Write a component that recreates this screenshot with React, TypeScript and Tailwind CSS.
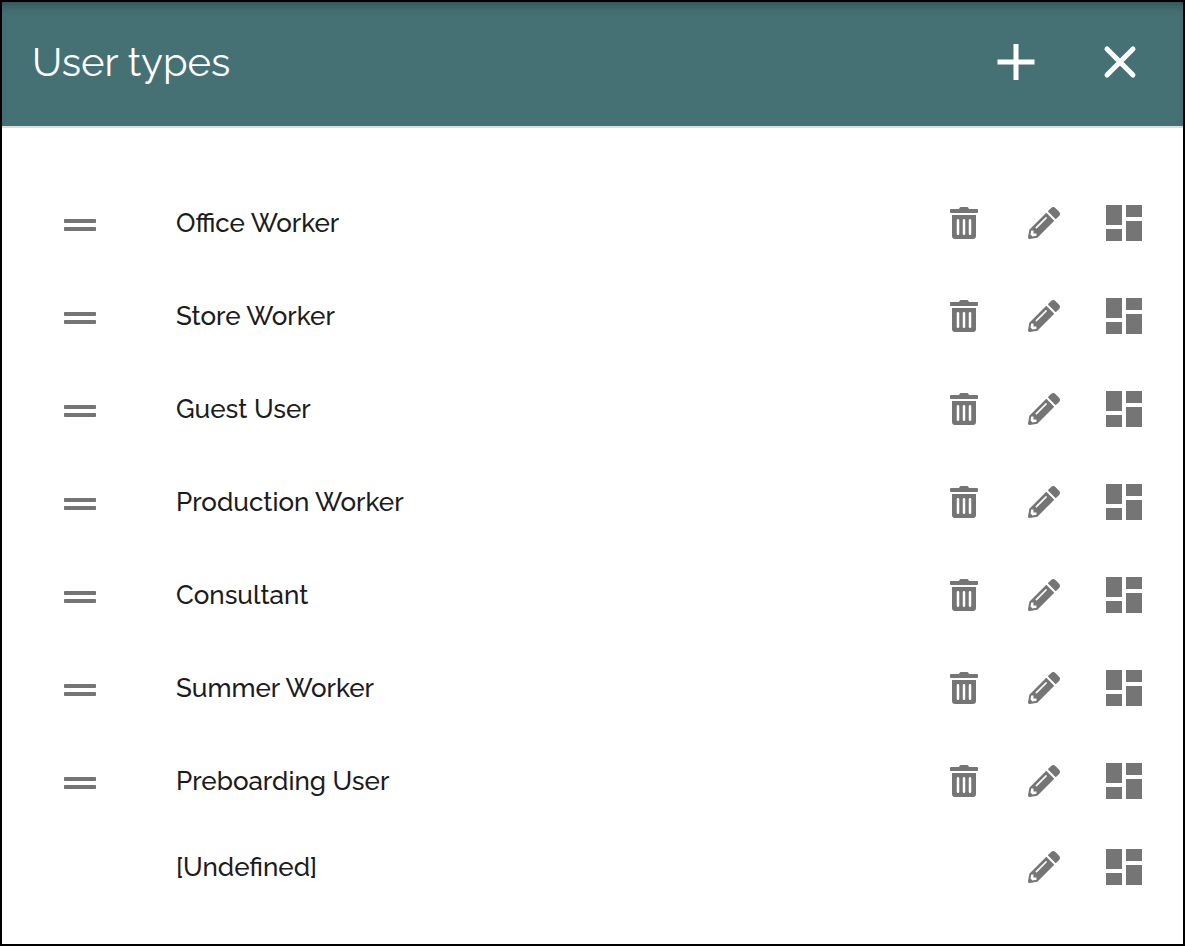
import React from "react";
import { FaGripLines, FaPencilAlt } from "react-icons/fa";
import { MdDashboard } from "react-icons/md";

type UserType = { name: string; fixed?: boolean };

const userTypes: UserType[] = [
  { name: "Office Worker" },
  { name: "Store Worker" },
  { name: "Guest User" },
  { name: "Production Worker" },
  { name: "Consultant" },
  { name: "Summer Worker" },
  { name: "Preboarding User" },
  { name: "[Undefined]", fixed: true },
];

function TrashIcon() {
  return (
    <svg viewBox="0 0 28 32" className="h-8 w-7" fill="currentColor">
      <path d="M1 2h8l.7-1.3A1.2 1.2 0 0 1 10.8 0h6.4a1.2 1.2 0 0 1 1.1.7L19 2h8a1 1 0 0 1 1 1v2a1 1 0 0 1-1 1H1a1 1 0 0 1-1-1V3a1 1 0 0 1 1-1z" />
      <path
        fillRule="evenodd"
        d="M2 8h24v21a3 3 0 0 1-3 3H5a3 3 0 0 1-3-3zM8 12a1.25 1.25 0 0 0-1.25 1.25v13.5a1.25 1.25 0 0 0 2.5 0v-13.5A1.25 1.25 0 0 0 8 12zM14 12a1.25 1.25 0 0 0-1.25 1.25v13.5a1.25 1.25 0 0 0 2.5 0v-13.5A1.25 1.25 0 0 0 14 12zM20 12a1.25 1.25 0 0 0-1.25 1.25v13.5a1.25 1.25 0 0 0 2.5 0v-13.5A1.25 1.25 0 0 0 20 12z"
      />
    </svg>
  );
}

function IconButton({ label, children }: { label: string; children: React.ReactNode }) {
  return (
    <button type="button" aria-label={label} className="flex h-12 w-20 shrink-0 items-center justify-center">
      {children}
    </button>
  );
}

function Row({ item }: { item: UserType }) {
  return (
    <li className={item.fixed ? "flex h-20 items-center" : "flex h-[93px] items-center"}>
      <div className="flex w-[156px] shrink-0 justify-center">
        {!item.fixed && (
          <button type="button" aria-label={`Move ${item.name}`} className="flex cursor-grab pt-[5px]">
            <FaGripLines className="size-8" />
          </button>
        )}
      </div>
      <span className="grow pl-[18px] text-[26px] leading-8 font-medium text-[#1c1c1c]">{item.name}</span>
      {!item.fixed && (
        <IconButton label={`Delete ${item.name}`}>
          <TrashIcon />
        </IconButton>
      )}
      <IconButton label={`Edit ${item.name}`}>
        <FaPencilAlt className="size-8" />
      </IconButton>
      <IconButton label={`Layout for ${item.name}`}>
        <MdDashboard className="size-12" />
      </IconButton>
    </li>
  );
}

export default function App() {
  return (
    <main className="min-h-screen border-2 border-black bg-white font-['Raleway','Lato',sans-serif] text-[#757575]">
      <header className="flex h-[126px] items-center border-b-2 border-[#dddddd] bg-[#457175] pr-[11px] pb-1 pl-[30px] text-white shadow-[inset_0_10px_12px_-8px_rgba(0,0,0,0.35)]">
        <h1 className="grow text-[40px] leading-12">User types</h1>
        <button type="button" aria-label="Add user type" className="flex h-12 w-[104px] items-center justify-center">
          <svg viewBox="0 0 40 40" className="size-10" fill="none" stroke="currentColor" strokeWidth="5">
            <path d="M20 2v36M1.5 20h37" />
          </svg>
        </button>
        <button type="button" aria-label="Close" className="flex h-12 w-[104px] items-center justify-center">
          <svg viewBox="0 0 40 40" className="size-10" fill="none" stroke="currentColor" strokeWidth="5" strokeLinecap="round">
            <path d="M7 7l26 26M33 7L7 33" />
          </svg>
        </button>
      </header>
      <ul className="pt-12 pr-[19px] pb-9">
        {userTypes.map((item) => (
          <Row key={item.name} item={item} />
        ))}
      </ul>
    </main>
  );
}
